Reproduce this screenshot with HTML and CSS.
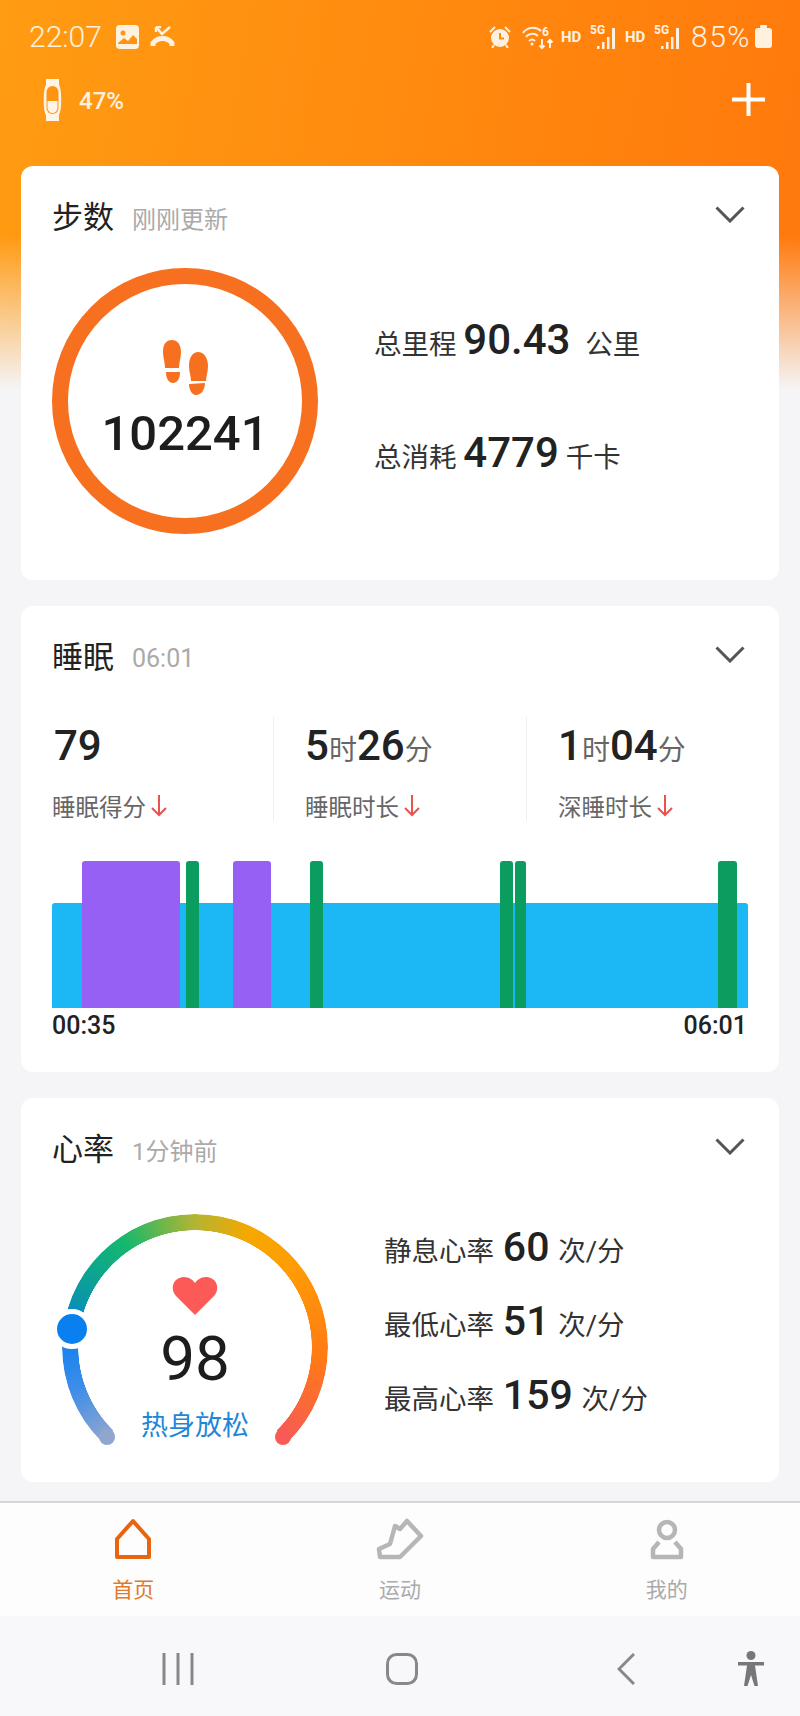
FILE: index.html
```html
<!DOCTYPE html>
<html>
    <head>
        <meta charset="utf-8">
        <title>首页</title>
        <link rel="stylesheet" href="styles.css">
    </head>
    <body>
        <div class="page">
            <div class="status_bar">
                <span class="clock">22:07</span>
                <svg class="st_photo" width="23" height="24" viewBox="0 0 23 24">
                    <rect width="23" height="24" rx="4" fill="#fff1e0"/>
                    <circle cx="7" cy="8" r="2.5" fill="#ff9312"/>
                    <path d="M2 18 L8 13 L12 16 L17 10 L21 14 V19 H2 Z" fill="#ff9312"/>
                </svg>
                <svg class="st_call" width="25" height="22" viewBox="0 0 25 22" fill="none" stroke="#fff1e0">
                    <path d="M6 1 L12 8 L20 1 M6 1 V6 M6 1 H11" stroke-width="2.4"/>
                    <path d="M3 20 V17 C8 11 17 11 22 17 V20" stroke-width="5" stroke-linejoin="round"/>
                </svg>
                <div class="status_right">
                    <svg class="st_alarm" width="22" height="22" viewBox="0 0 22 22" fill="#fff1e0">
                        <circle cx="11" cy="12" r="9"/>
                        <path d="M1 6 L6 1 M16 1 L21 6 M5 19 L3 22 M17 19 L19 22" stroke="#fff1e0" stroke-width="2" fill="none"/>
                        <path d="M11 7 V12.5 H15" stroke="#ff8a10" stroke-width="2" fill="none"/>
                    </svg>
                    <svg class="st_wifi" width="32" height="28" viewBox="0 0 32 28" fill="none" stroke="#fff1e0" stroke-width="2">
                        <path d="M1 10 C5 4 14 3 19 8 M4 14 C7 10 13 10 16 13 M7 18 C9 16 11 16 13 18"/>
                        <circle cx="10" cy="21" r="1.5" fill="#fff1e0" stroke="none"/>
                        <text x="20" y="13" class="st_small" fill="#fff1e0" stroke="none">6</text>
                        <path d="M20 16 V25 M17.5 22.5 L20 25 L22.5 22.500 M28 25 V17 M25.5 19.5 L28 17 L30.5 19.5"/>
                    </svg>
                    <span class="st_hd">HD</span>
                    <svg class="st_signal" width="28" height="28" viewBox="0 0 28 28" fill="#fff1e0">
                        <text x="0" y="11" class="st_small">5G</text>
                        <rect x="7" y="23" width="2.5" height="3"/>
                        <rect x="12" y="19" width="2.5" height="7"/>
                        <rect x="17" y="14" width="2.5" height="12"/>
                        <rect x="22" y="5" width="3" height="21"/>
                    </svg>
                    <span class="st_hd">HD</span>
                    <svg class="st_signal" width="28" height="28" viewBox="0 0 28 28" fill="#fff1e0">
                        <text x="0" y="11" class="st_small">5G</text>
                        <rect x="7" y="23" width="2.5" height="3"/>
                        <rect x="12" y="19" width="2.5" height="7"/>
                        <rect x="17" y="14" width="2.5" height="12"/>
                        <rect x="22" y="5" width="3" height="21"/>
                    </svg>
                    <span class="clock st_batt_num">85%</span>
                    <svg class="st_batt" width="17" height="23" viewBox="0 0 17 23" fill="#fff1e0">
                        <rect x="5" y="0" width="7" height="3" rx="1"/>
                        <rect x="0" y="3" width="17" height="20" rx="3"/>
                    </svg>
                </div>
            </div>

            <div class="top_bar">
                <div class="band">
                    <svg width="19" height="42" viewBox="0 0 19 42">
                        <path d="M3 0 H16 V6 C19 10 19 32 16 36 V42 H3 V36 C0 32 0 10 3 6 Z" fill="#fff4e6"/>
                        <rect x="3.5" y="7" width="12" height="28" rx="6" fill="#ff9312"/>
                        <path d="M4.5 22 H14.5 V28 C14.5 36 4.5 36 4.5 28 Z" fill="#fff4e6"/>
                    </svg>
                    <span class="band_num">47%</span>
                </div>
                <svg width="33" height="33" viewBox="0 0 33 33" stroke="#fff" stroke-width="4">
                    <path d="M0 16.5 H33 M16.5 0 V33"/>
                </svg>
            </div>

            <!-- steps -->
            <div class="card">
                <div class="card_head">
                    <span class="card_title">步数</span>
                    <span class="card_sub">刚刚更新</span>
                    <svg class="chevron" width="30" height="17" viewBox="0 0 30 17" fill="none" stroke="#555" stroke-width="3">
                        <path d="M1.5 1.5 L15 15 L28.500 1.5"/>
                    </svg>
                </div>
                <div class="steps_body">
                    <div class="steps_ring">
                        <svg class="feet" width="45" height="55" viewBox="0 0 45 55" fill="#f7701f">
                            <path d="M0 12 C0 3 4 0 9 0 C14 0 18 4 18 12 C18 18 16 22 16 28 L2 28 C2 22 0 18 0 12 Z"/>
                            <path d="M3 32 L17 32 C17 39 14 43 10 43 C6 43 3 39 3 32 Z"/>
                            <path d="M26 26 C26 17 30 12 35 12 C41 12 45 18 45 26 C45 32 43 36 43 41 L28 41 C28 36 26 32 26 26 Z"/>
                            <path d="M26 44 L42 43 C42 50 38 55 33 55 C29 55 26 50 26 44 Z"/>
                        </svg>
                        <div class="steps_num">102241</div>
                    </div>
                    <div class="steps_stats">
                        <div class="stat_row">总里程 <b class="stat_num">90.43</b> <span class="stat_unit">公里</span></div>
                        <div class="stat_row">总消耗 <b class="stat_num">4779</b> 千卡</div>
                    </div>
                </div>
            </div>

            <!-- sleep -->
            <div class="card">
                <div class="card_head">
                    <span class="card_title">睡眠</span>
                    <span class="card_sub sub_num">06:01</span>
                    <svg class="chevron" width="30" height="17" viewBox="0 0 30 17" fill="none" stroke="#555" stroke-width="3">
                        <path d="M1.5 1.5 L15 15 L28.500 1.5"/>
                    </svg>
                </div>
                <div class="sleep_cols">
                    <div class="sleep_col">
                        <div class="sleep_val score"><b>79</b></div>
                        <div class="sleep_label">睡眠得分<svg class="down" width="16" height="22" viewBox="0 0 16 22" fill="none" stroke="#e8524f" stroke-width="2"><path d="M8 0 V20 M1 13 L8 20 L15 13"/></svg></div>
                    </div>
                    <div class="sleep_col">
                        <div class="sleep_val"><b>5</b>时<b>26</b>分</div>
                        <div class="sleep_label">睡眠时长<svg class="down" width="16" height="22" viewBox="0 0 16 22" fill="none" stroke="#e8524f" stroke-width="2"><path d="M8 0 V20 M1 13 L8 20 L15 13"/></svg></div>
                    </div>
                    <div class="sleep_col">
                        <div class="sleep_val"><b>1</b>时<b>04</b>分</div>
                        <div class="sleep_label">深睡时长<svg class="down" width="16" height="22" viewBox="0 0 16 22" fill="none" stroke="#e8524f" stroke-width="2"><path d="M8 0 V20 M1 13 L8 20 L15 13"/></svg></div>
                    </div>
                </div>
                <div class="sleep_chart">
                    <div class="seg light"></div>
                    <div class="seg deep" style="left: 30px; width: 98px"></div>
                    <div class="seg rem" style="left: 134px; width: 13px"></div>
                    <div class="seg deep" style="left: 181px; width: 38px"></div>
                    <div class="seg rem" style="left: 258px; width: 13px"></div>
                    <div class="seg rem" style="left: 448px; width: 13px"></div>
                    <div class="seg rem" style="left: 463px; width: 11px"></div>
                    <div class="seg rem" style="left: 666px; width: 19px"></div>
                </div>
                <div class="chart_times">
                    <span>00:35</span>
                    <span>06:01</span>
                </div>
            </div>

            <!-- heart rate -->
            <div class="card card_last">
                <div class="card_head">
                    <span class="card_title">心率</span>
                    <span class="card_sub">1分钟前</span>
                    <svg class="chevron" width="30" height="17" viewBox="0 0 30 17" fill="none" stroke="#555" stroke-width="3">
                        <path d="M1.5 1.5 L15 15 L28.500 1.5"/>
                    </svg>
                </div>
                <div class="hr_body">
                    <div class="gauge">
                        <div class="gauge_ring"></div>
                        <div class="gauge_cap cap_left"></div>
                        <div class="gauge_cap cap_right"></div>
                        <div class="gauge_knob"></div>
                        <svg class="heart" width="46" height="38" viewBox="0 0 46 38" fill="#fb5a57">
                            <path d="M23 38 L4 19 C-3 11 2 0 12 0 C17 0 21 3 23 6 C25 3 29 0 34 0 C44 0 49 11 42 19 Z"/>
                        </svg>
                        <div class="hr_num">98</div>
                        <div class="hr_state">热身放松</div>
                    </div>
                    <div class="hr_stats">
                        <div class="stat_row">静息心率 <b class="stat_num">60</b> 次/分</div>
                        <div class="stat_row">最低心率 <b class="stat_num">51</b> 次/分</div>
                        <div class="stat_row">最高心率 <b class="stat_num">159</b> 次/分</div>
                    </div>
                </div>
            </div>

            <div class="tab_bar">
                <div class="tab tab_on">
                    <svg width="36" height="44" viewBox="0 0 36 44" fill="none" stroke="#e8640f" stroke-width="4" stroke-linejoin="round">
                        <path d="M18 4 L34 22 V40 H2 V22 Z"/>
                    </svg>
                    <div class="tab_label">首页</div>
                </div>
                <div class="tab">
                    <svg width="48" height="44" viewBox="0 0 48 44" fill="none" stroke="#b6b6b8" stroke-width="4.5" stroke-linejoin="round">
                        <path d="M3 32 L14 27 L19 9 L24 12 L31 4 L45 19 L24 40 L4 40 Z"/>
                    </svg>
                    <div class="tab_label">运动</div>
                </div>
                <div class="tab">
                    <svg width="34" height="44" viewBox="0 0 34 44" fill="none" stroke="#b6b6b8" stroke-width="4.5" stroke-linejoin="round">
                        <circle cx="17" cy="13" r="8"/>
                        <path d="M9 25 L3 32 V40 H31 V32 L25 25"/>
                    </svg>
                    <div class="tab_label">我的</div>
                </div>
            </div>

            <div class="nav_bar">
                <svg class="nav_menu" width="32" height="32" viewBox="0 0 32 32" stroke="#888" stroke-width="3">
                    <path d="M2 0 V32 M16 0 V32 M30 0 V32"/>
                </svg>
                <svg class="nav_home" width="32" height="32" viewBox="0 0 32 32" fill="none" stroke="#888" stroke-width="3">
                    <rect x="1.5" y="1.5" width="29" height="29" rx="9"/>
                </svg>
                <svg class="nav_back" width="18" height="32" viewBox="0 0 18 32" fill="none" stroke="#888" stroke-width="3">
                    <path d="M17 1 L2 16 L17 31"/>
                </svg>
                <svg class="nav_access" width="28" height="36" viewBox="0 0 28 36" fill="#777">
                    <circle cx="14" cy="4.500" r="4.500"/>
                    <path d="M1 11 H27 V14.500 H18 L21 35 H17.500 L14 24 L10.500 35 H7 L10 14.500 H1 Z"/>
                </svg>
            </div>
        </div>
    </body>
</html>
```

FILE: styles.css
```css
*{
    box-sizing: border-box;
}
body{
    margin: 0; background-color: #f5f5f7; color: #222;
    font-family: Roboto, "Noto Sans CJK SC", sans-serif;
}
svg{
    display: block; flex-shrink: 0;
}
.page{
    width: 800px; height: 1716px; overflow: hidden;
    background-image: linear-gradient(to bottom, rgba(245,245,247,0) 235px, #f5f5f7 390px), linear-gradient(100deg, #ff9c12, #ff780c);
    background-size: 100% 390px; background-repeat: no-repeat;
}

/* status bar */
.status_bar{
    display: flex; align-items: center; height: 73px; padding: 0 28px 0 29px; color: #fff1e0;
}
.clock{
    font-size: 30px; font-weight: 300;
}
.st_photo{
    margin-left: 14px;
}
.st_call{
    margin-left: 11px;
}
.status_right{
    display: flex; align-items: center; margin-left: auto;
}
.st_wifi{
    margin-left: 11px;
}
.st_small{
    font-size: 12px; font-weight: 700;
}
.st_hd{
    font-size: 15px; font-weight: 700; margin-left: 7px; width: 21px;
}
.st_signal{
    margin-left: 8px;
}
.st_batt_num{
    margin-left: 9px; letter-spacing: 1.500px;
}
.st_batt{
    margin-left: 4px;
}
.top_bar{
    display: flex; align-items: center; justify-content: space-between; height: 53px; margin-bottom: 40px; padding: 0 35px 0 43px;
}
.band{
    display: flex; align-items: center; gap: 17px;
}
.band_num{
    font-size: 24px; font-weight: 500; color: #fff1e0; margin-top: 3px;
}

/* cards */
.card{
    width: 758px; margin: 0 21px 26px; padding: 0 31px; background-color: #fff; border-radius: 12px;
}
.card_last{
    margin-bottom: 19px;
}
.card_head{
    display: flex; align-items: center; height: 100px;
}
.card_title{
    font-size: 31px; color: #222; margin-top: -4px;
}
.card_sub{
    font-size: 24px; color: #aaa; margin-left: 18px; margin-top: 2px;
}
.sub_num{
    font-size: 25px; margin-top: 5px;
}
.chevron{
    margin-left: auto; margin-right: 3px; margin-top: -3px;
}
.stat_row{
    height: 50px; line-height: 50px; font-size: 27.500px; color: #333; white-space: nowrap;
}
.stat_num{
    font-size: 42px; font-weight: 500; color: #222;
}
.stat_unit{
    margin-left: 8px;
}

/* steps */
.steps_body{
    display: flex; gap: 56px; height: 314px; padding-top: 2px;
}
.steps_ring{
    display: flex; flex-direction: column; align-items: center;
    width: 266px; height: 266px; padding-top: 56px; border: 16px solid #f7701f; border-radius: 50%;
}
.steps_num{
    margin-top: 9px; font-size: 49px; line-height: 60px; font-weight: 500; color: #1d1d1f;
}
.steps_stats{
    display: flex; flex-direction: column; gap: 63px; padding-top: 47px;
}

/* sleep */
.sleep_cols{
    display: grid; grid-template-columns: 221px 253px 1fr; margin-top: 11px;
}
.sleep_col{
    height: 104px;
}
.sleep_col + .sleep_col{
    border-left: 1px solid #eee; padding-left: 31px;
}
.sleep_val{
    margin-top: 7px; height: 44px; line-height: 44px; font-size: 28px; color: #666;
}
.score{
    padding-left: 2px;
}
.sleep_val b{
    font-size: 42px; font-weight: 500; color: #222;
}
.sleep_label{
    display: flex; align-items: center; margin-top: 23px; height: 30px; font-size: 23.500px; color: #666;
}
.down{
    margin-left: 5px;
}
.sleep_chart{
    position: relative; height: 147px; margin-top: 40px;
}
.seg{
    position: absolute; top: 0; bottom: 0; border-radius: 3px 3px 0 0;
}
.light{
    left: 0; right: 0; top: 42px; background-color: #1cb8f5;
}
.deep{
    background-color: #9660f5;
}
.rem{
    background-color: #0a9d5f;
}
.chart_times{
    display: flex; justify-content: space-between; margin-top: 3px; padding-right: 1px;
    height: 61px; line-height: 30px; font-size: 25px; font-weight: 500; color: #222;
}

/* heart rate */
.hr_body{
    display: flex; gap: 56px; height: 268px; margin-top: 16px; padding-left: 10px;
}
.gauge{
    position: relative; display: flex; flex-direction: column; align-items: center;
    width: 266px; height: 240px; padding-top: 63px;
}
.gauge_ring{
    position: absolute; left: 0; top: 0; width: 266px; height: 266px; border-radius: 50%;
    background: conic-gradient(#b4b432 0deg, #f5a800 25deg, #ff9d05 50deg, #ff7a15 95deg, #f85a55 135.600deg, transparent 135.600deg, transparent 224.400deg, #8fa6cf 224.400deg, #3f8ee8 250deg, #0a7ff0 278deg, #0a96a8 292deg, #14b86e 326deg, #b4b432 360deg);
    -webkit-mask: radial-gradient(circle, transparent 116.500px, #000 117px);
    mask: radial-gradient(circle, transparent 116.500px, #000 117px);
}
.gauge_cap{
    position: absolute; top: 215px; width: 16px; height: 16px; border-radius: 50%;
}
.cap_left{
    left: 37px; background-color: #8fa6cf;
}
.cap_right{
    left: 213px; background-color: #f85a55;
}
.gauge_knob{
    position: absolute; left: -10px; top: 95px; width: 40px; height: 40px; background-color: #0a7ff0;
    border: 5px solid #fff; border-radius: 50%;
}
.heart{
    flex-shrink: 0;
}
.hr_num{
    margin-top: 9px; font-size: 62px; line-height: 70px; color: #1d1d1f;
}
.hr_state{
    margin-top: 14px; font-size: 27px; line-height: 36px; color: #1f87d8;
}
.hr_stats{
    display: flex; flex-direction: column; gap: 24px; padding-top: 8px;
}
.hr_stats .stat_num{
    font-size: 41px; margin: 0 2px;
}

/* bottom bars */
.tab_bar{
    display: grid; grid-template-columns: repeat(3, 1fr); height: 115px; padding-top: 14px;
    background-color: #fdfdfe; border-top: 2px solid #d6d6d8;
}
.tab{
    display: flex; flex-direction: column; align-items: center; color: #aaa;
}
.tab_on{
    color: #e07a2a;
}
.tab_label{
    margin-top: 14px; font-size: 21px; line-height: 30px;
}
.nav_bar{
    display: flex; align-items: center; height: 100px; padding-left: 162px; padding-top: 6px; background-color: #f8f8fa;
}
.nav_home{
    margin-left: 192px;
}
.nav_back{
    margin-left: 199px;
}
.nav_access{
    margin-left: 102px;
}
```
